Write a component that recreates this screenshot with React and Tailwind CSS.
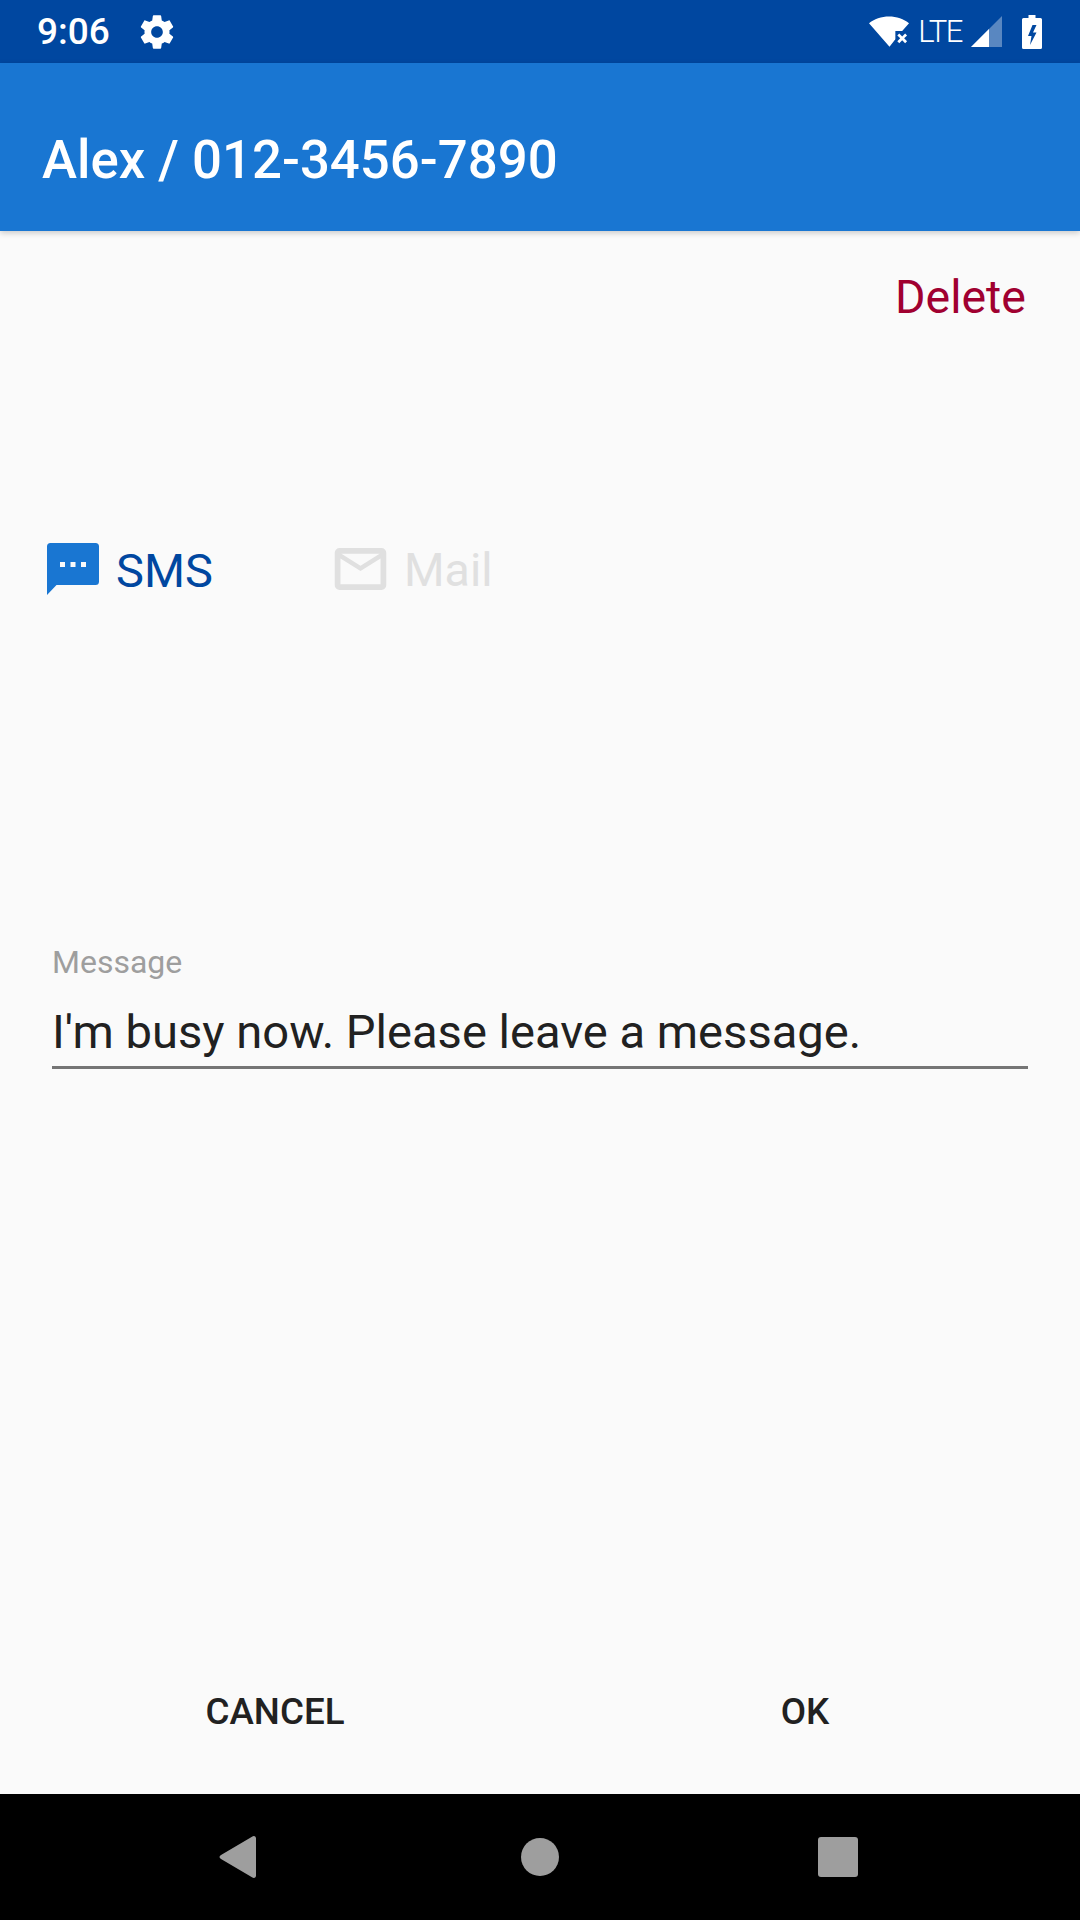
import React from "react";

const StatusBar = () => (
  <div className="h-[63px] shrink-0 bg-[#0047a0] flex items-center text-white">
    <span className="ml-[37px] text-[37px] font-medium leading-none">9:06</span>
    <svg className="ml-[27px]" width="40" height="40" viewBox="0 0 24 24" fill="#fff">
      <path d="M19.43 12.98c.04-.32.07-.64.07-.98s-.03-.66-.07-.98l2.11-1.65c.19-.15.24-.42.12-.64l-2-3.46c-.12-.22-.39-.3-.61-.22l-2.49 1c-.52-.4-1.08-.73-1.69-.98l-.38-2.65C14.46 2.18 14.25 2 14 2h-4c-.25 0-.46.18-.49.42l-.38 2.65c-.61.25-1.17.59-1.69.98l-2.49-1c-.23-.09-.49 0-.61.22l-2 3.46c-.13.22-.07.49.12.64l2.11 1.65c-.04.32-.07.65-.07.98s.03.66.07.98l-2.11 1.65c-.19.15-.24.42-.12.64l2 3.46c.12.22.39.3.61.22l2.49-1c.52.4 1.08.73 1.69.98l.38 2.65c.03.24.24.42.49.42h4c.25 0 .46-.18.49-.42l.38-2.65c.61-.25 1.17-.59 1.69-.98l2.49 1c.23.09.49 0 .61-.22l2-3.46c.12-.22.07-.49-.12-.64l-2.11-1.65zM12 15.5c-1.93 0-3.5-1.57-3.5-3.5s1.57-3.5 3.5-3.5 3.5 1.57 3.5 3.5-1.57 3.5-3.5 3.5z" />
    </svg>
    <div className="ml-auto flex items-center">
      {/* wifi with x */}
      <svg width="41" height="32" viewBox="0 0 42 32" fill="#fff">
        <path d="M0 7C5 2.5 13 0 20.500 0S36 2.500 41 7L34 15H27v8.500L21 31 0 7z" />
        <path d="M29 19.500l2-2 3 3 3-3 2 2-3 3 3 3-2 2-3-3-3 3-2-2 3-3z" />
      </svg>
      <span className="ml-[8px] text-[31px] font-light leading-none tracking-[-1.5px]">LTE</span>
      <svg className="ml-[9px]" width="31" height="31" viewBox="0 0 31 31">
        <path d="M31 0v31H0z" fill="#fff" fillOpacity="0.35" />
        <path d="M18 13v18H0z" fill="#fff" />
      </svg>
      <svg className="ml-[20px] mr-[38px]" width="20" height="34" viewBox="0 0 20 34">
        <path fill="#fff" d="M6.500 0h7v3h5A1.500 1.500 0 0 1 20 4.500v28a1.500 1.500 0 0 1-1.500 1.500h-17A1.500 1.500 0 0 1 0 32.500v-28A1.500 1.500 0 0 1 1.500 3h5z" />
        <path fill="#0047a0" d="M10.500 10L6 21h3.500L8 30l6.500-12.500H11L14.500 10z" />
      </svg>
    </div>
  </div>
);

const AppBar = () => (
  <div className="relative z-10 h-[168px] shrink-0 bg-[#1976d2] flex items-center pl-[42px] pt-[26px] shadow-[0_2px_6px_rgba(0,0,0,0.2)]">
    <h1 className="text-[52.75px] font-medium text-white leading-none">Alex / 012-3456-7890</h1>
  </div>
);

const Channels = () => (
  <div className="mt-[217px] flex items-center h-[60px] pl-[47px]">
    <svg width="52" height="52" viewBox="0 0 52 52">
      <path fill="#1976d2" d="M3.500 0h45A3.500 3.500 0 0 1 52 3.500v35a3.500 3.500 0 0 1-3.500 3.500H9.500L0 52V3.500A3.500 3.500 0 0 1 3.500 0z" />
      <path fill="#fafafa" d="M13 19h5v5h-5zM23.500 19h5v5h-5zM34 19h5v5h-5z" />
    </svg>
    <span className="ml-[17px] w-[218px] mt-[3px] text-[47px] leading-none text-[#0047a0]">SMS</span>
    <svg width="53" height="42" viewBox="0 0 54 44">
      <path fill="#e0e0e0" d="M5 0h44a5 5 0 0 1 5 5v34a5 5 0 0 1-5 5H5a5 5 0 0 1-5-5V5a5 5 0 0 1 5-5zm1 11v27h42V11L27 24 6 11zm1-5l20 12.500L47 6H7z" fillRule="evenodd" />
    </svg>
    <span className="ml-[17px] mt-[3px] text-[46.5px] leading-none text-[#e0e0e0]">Mail</span>
  </div>
);

const MessageField = () => (
  <div className="mt-[347px] mx-[52px]">
    <div className="text-[32px] leading-none text-[#9e9e9e]">Message</div>
    <div className="mt-[26px] text-[47.12px] leading-[56px] text-[#212121] pb-[6px] border-b-[3px] border-[#757575]">
      I'm busy now. Please leave a message.
    </div>
  </div>
);

const NavBar = () => (
  <div className="h-[126px] shrink-0 bg-black flex items-center">
    <svg className="ml-[219px]" width="38" height="42" viewBox="0 0 38 42">
      <path fill="#9e9e9e" d="M33 .700c2-1.300 4-.500 4 1.800v37c0 2.300-2 3.100-4 1.800L2 23c-2-1.200-2-2.800 0-4z" />
    </svg>
    <div className="ml-[264px] w-[38px] h-[38px] rounded-full bg-[#9e9e9e]" />
    <div className="ml-[259px] w-[40px] h-[40px] rounded-[3px] bg-[#9e9e9e]" />
  </div>
);

export default function App() {
  return (
    <div className="w-[1080px] h-[1920px] flex flex-col bg-[#fafafa] overflow-hidden font-['Roboto',sans-serif]">
      <StatusBar />
      <AppBar />
      <div className="flex-1 flex flex-col">
        <div className="mt-[41px] pr-[54px] text-right text-[46.5px] leading-[50px] text-[#a00030]">Delete</div>
        <Channels />
        <MessageField />
        <div className="mt-auto mb-[34px] px-[10px] grid grid-cols-2 h-[96px] items-center text-[36.75px] font-medium text-[#212121] text-center">
          <span>CANCEL</span>
          <span>OK</span>
        </div>
      </div>
      <NavBar />
    </div>
  );
}
